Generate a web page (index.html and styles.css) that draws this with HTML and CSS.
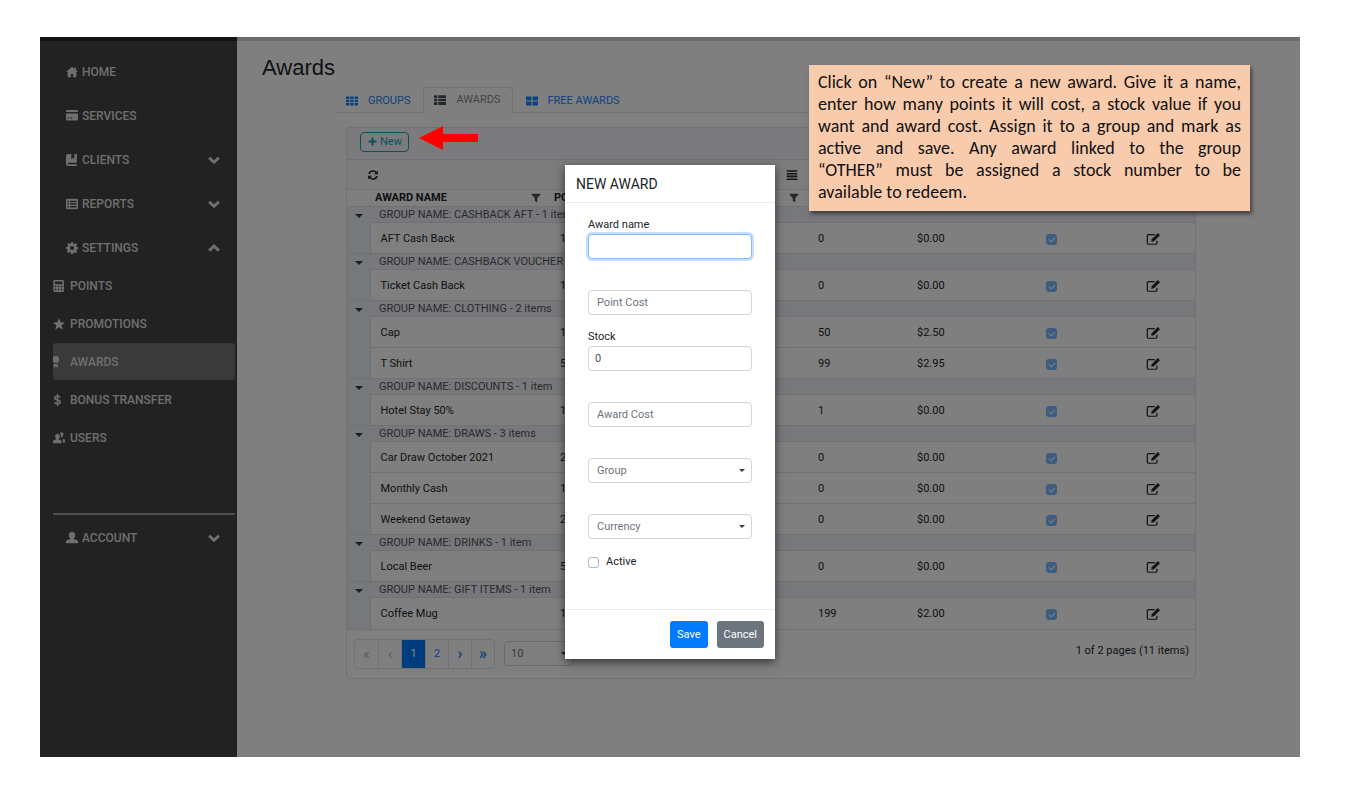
FILE: index.html
```html
<!DOCTYPE html>
<html lang="en">
<head>
<meta charset="utf-8">
<title>Awards</title>
<link rel="stylesheet" href="styles.css">
</head>
<body>
<svg class="sprite" aria-hidden="true">
  <symbol id="i-home" viewBox="0 0 16 16"><path d="M8 1 0 8h2.200v7H6.500v-4.500h3V15h4.300V8H16l-2.500-2.200V2h-2v2z"/></symbol>
  <symbol id="i-card" viewBox="0 0 16 16"><path d="M1 0h14a1 1 0 0 1 1 1v1.800H0V1a1 1 0 0 1 1-1zM0 4.500h16V13a1 1 0 0 1-1 1H1a1 1 0 0 1-1-1zM2 10v1.200h2V10zm3.500 0v1.200h3V10z" fill-rule="evenodd"/></symbol>
  <symbol id="i-book" viewBox="0 0 16 16"><path d="M3 0h4v7l2-2 2 2V0h3.500v11.500H3.300a1 1 0 0 0 0 2h11.200V16H3a3 3 0 0 1-3-3V3a3 3 0 0 1 3-3z"/></symbol>
  <symbol id="i-list" viewBox="0 0 16 16"><path fill-rule="evenodd" d="M1.500 1h13A1.500 1.500 0 0 1 16 2.500v11a1.500 1.500 0 0 1-1.500 1.500h-13A1.500 1.500 0 0 1 0 13.500v-11A1.500 1.500 0 0 1 1.500 1zM2 3.500v2h2v-2zm3.500 0v2H14v-2zM2 7v2h2V7zm3.500 0v2H14V7zM2 10.500v2h2v-2zm3.500 0v2H14v-2z"/></symbol>
  <symbol id="i-gear" viewBox="0 0 16 16"><path fill-rule="evenodd" d="M6.700 0h2.600l.4 2.200 1.400.6 1.900-1.300 1.800 1.800-1.300 1.900.6 1.400 2.200.4v2.500l-2.200.4-.6 1.400 1.300 1.900-1.800 1.800-1.900-1.300-1.400.6L9.300 16H6.700l-.4-2.200-1.400-.6L3 14.500l-1.800-1.800 1.300-1.900-.6-1.400L0 9V6.600l2.200-.4.6-1.400L1.500 3l1.800-1.800 1.900 1.300 1.100-.4zM8 5.200a2.800 2.800 0 1 0 0 5.600 2.800 2.800 0 0 0 0-5.600z"/></symbol>
  <symbol id="i-calc" viewBox="0 0 16 16"><path fill-rule="evenodd" d="M2 0h11a1.500 1.500 0 0 1 1.500 1.500v13A1.500 1.500 0 0 1 13 16H2a1.500 1.500 0 0 1-1.500-1.500v-13A1.500 1.500 0 0 1 2 0zm.5 2v3.500h10V2zm0 5.500v2h2v-2zm4 0v2h2v-2zm4 0v2h2v-2zm-8 4v2h2v-2zm4 0v2h2v-2zm4 0v2h2v-2z"/></symbol>
  <symbol id="i-star" viewBox="0 0 16 16"><path d="m8 0 2.200 5.500 5.800.4-4.500 3.700L13 15.500l-5-3.200-5 3.200 1.500-5.900L0 5.900l5.800-.4z"/></symbol>
  <symbol id="i-award" viewBox="0 0 16 16"><circle cx="3.500" cy="4.500" r="4.500"/><path d="M1 10.500h5.500V16l-2.700-2L1 16z"/></symbol>
  <symbol id="i-dollar" viewBox="0 0 16 16"><path d="M9.500 4.700C9 3.500 7.800 3 6 3 3.800 3 2.300 3.800 2.300 5.300 2.300 9 9.800 6.700 9.800 10.800c0 1.400-1.600 2.300-3.800 2.300-2.300 0-3.500-.8-4-2.100M6 0v16" fill="none" stroke="currentColor" stroke-width="2"/></symbol>
  <symbol id="i-users" viewBox="0 0 16 16"><path d="M6 2.500a3.200 3.200 0 0 1 3.200 3.200c0 1.500-.9 3.300-2 4L10.500 11a1.500 1.500 0 0 1 .9 1.400V15H0v-2.600A1.500 1.500 0 0 1 1 11l3.700-1.300c-1-.7-1.900-2.500-1.900-4A3.200 3.200 0 0 1 6 2.500zM10 1a2.500 2.500 0 0 1 4 2c0 1.300-.5 2.300-1.200 3L10.500 8l.3-2.500A5 5 0 0 0 9 2zM13 9l2 .5a1.500 1.500 0 0 1 1 1.500v3h-3z"/></symbol>
  <symbol id="i-user" viewBox="0 0 16 16"><path d="M8 0a4.200 4.200 0 0 1 4.200 4.200c0 2-1 4-2.400 5l4.700 1.500A2 2 0 0 1 16 12.500V15H0v-2.500a2 2 0 0 1 1.500-1.800l4.700-1.500c-1.400-1-2.400-3-2.400-5A4.200 4.200 0 0 1 8 0z"/></symbol>
  <symbol id="i-down" viewBox="0 0 16 16"><path d="m1.500 5 6.500 6 6.500-6" fill="none" stroke="currentColor" stroke-width="4"/></symbol>
  <symbol id="i-up" viewBox="0 0 16 16"><path d="m1.500 11.500 6.500-6 6.500 6" fill="none" stroke="currentColor" stroke-width="4"/></symbol>
  <symbol id="i-grid9" viewBox="0 0 16 16"><path d="M0 2h4.500v3.300H0zm5.700 0h4.500v3.300H5.700zm5.800 0H16v3.300h-4.500zM0 6.400h4.500v3.200H0zm5.700 0h4.500v3.200H5.700zm5.800 0H16v3.200h-4.500zM0 10.700h4.500V14H0zm5.700 0h4.500V14H5.700zm5.800 0H16V14h-4.500z"/></symbol>
  <symbol id="i-thlist" viewBox="0 0 16 16"><path d="M0 1.500h4.500v3.700H0zm5.700 0H16v3.700H5.700zM0 6.200h4.500v3.600H0zm5.700 0H16v3.600H5.700zM0 10.800h4.500v3.700H0zm5.700 0H16v3.700H5.700z"/></symbol>
  <symbol id="i-grid4" viewBox="0 0 16 16"><path d="M0 2h7.300v5.400H0zm8.700 0H16v5.400H8.700zM0 8.600h7.300V14H0zm8.700 0H16V14H8.700z"/></symbol>
  <symbol id="i-plus" viewBox="0 0 16 16"><path d="M6.300 1h3.400v5.300H15v3.400H9.700V15H6.300V9.700H1V6.300h5.300z"/></symbol>
  <symbol id="i-refresh" viewBox="0 0 16 16"><path d="M2.500 6.500A5.700 5.700 0 0 1 12.500 5M13.500 9.500A5.700 5.700 0 0 1 3.500 11" fill="none" stroke="currentColor" stroke-width="2.200"/><path d="M14.500 2v5h-5zM1.500 14V9h5z"/></symbol>
  <symbol id="i-menu" viewBox="0 0 16 16"><path d="M1 1.500h14v2.200H1zm0 3.700h14v2.100H1zm0 3.600h14V11H1zm0 3.700h14v2.200H1z"/></symbol>
  <symbol id="i-filter" viewBox="0 0 16 16"><path d="M1 1h14v1.800L10 8v7l-4-2.500V8L1 2.800z"/></symbol>
  <symbol id="i-edit" viewBox="0 0 16 16"><path d="M10 3H3A1.500 1.500 0 0 0 1.500 4.500v8A1.500 1.500 0 0 0 3 14h8a1.500 1.500 0 0 0 1.500-1.500V10" fill="none" stroke="currentColor" stroke-width="1.400"/><path d="m6 11 .5-2.800 6.500-6.500a.8.8 0 0 1 1.100 0l1.400 1.400a.8.8 0 0 1 0 1.100L9 10.500z"/></symbol>
</svg>

<div class="frame">
  <aside class="sidebar">
    <nav>
      <ul class="menu">
        <li><a class="item" href="#"><svg class="ic"><use href="#i-home"/></svg>HOME</a></li>
        <li><a class="item" href="#"><svg class="ic"><use href="#i-card"/></svg>SERVICES</a></li>
        <li><a class="item" href="#"><svg class="ic"><use href="#i-book"/></svg>CLIENTS<svg class="ic chev"><use href="#i-down"/></svg></a></li>
        <li><a class="item" href="#"><svg class="ic"><use href="#i-list"/></svg>REPORTS<svg class="ic chev"><use href="#i-down"/></svg></a></li>
        <li><a class="item" href="#"><svg class="ic"><use href="#i-gear"/></svg>SETTINGS<svg class="ic chev"><use href="#i-up"/></svg></a>
          <ul class="submenu">
            <li><a class="sub" href="#"><svg class="ic"><use href="#i-calc"/></svg>POINTS</a></li>
            <li><a class="sub" href="#"><svg class="ic"><use href="#i-star"/></svg>PROMOTIONS</a></li>
            <li><a class="sub active" href="#"><svg class="ic"><use href="#i-award"/></svg>AWARDS</a></li>
            <li><a class="sub" href="#"><svg class="ic"><use href="#i-dollar"/></svg>BONUS TRANSFER</a></li>
            <li><a class="sub" href="#"><svg class="ic"><use href="#i-users"/></svg>USERS</a></li>
          </ul>
        </li>
      </ul>
    </nav>
    <div class="account">
      <a class="item" href="#"><svg class="ic"><use href="#i-user"/></svg>ACCOUNT<svg class="ic chev"><use href="#i-down"/></svg></a>
    </div>
  </aside>

  <main class="main">
    <h1>Awards</h1>
    <div class="content">
      <nav class="tabs">
        <a class="tab" href="#"><svg class="ic"><use href="#i-grid9"/></svg>GROUPS</a>
        <a class="tab current" href="#"><svg class="ic"><use href="#i-thlist"/></svg>AWARDS</a>
        <a class="tab" href="#"><svg class="ic"><use href="#i-grid4"/></svg>FREE AWARDS</a>
      </nav>
      <section class="card">
        <div class="toolbar">
          <button class="new" type="button"><svg class="ic"><use href="#i-plus"/></svg>New</button>
        </div>
        <table>
          <colgroup><col class="c-toggle"><col class="c-name"><col><col class="c-stock"><col class="c-cost"><col class="c-active"><col class="c-edit"></colgroup>
          <thead>
            <tr class="tools"><td colspan="2"><button class="icon-btn" type="button" aria-label="Refresh"><svg class="ic"><use href="#i-refresh"/></svg></button></td><td class="end"><button class="icon-btn" type="button" aria-label="Columns"><svg class="ic"><use href="#i-menu"/></svg></button></td><td colspan="4"></td></tr>
            <tr class="heads"><th colspan="2"><div class="head first">AWARD NAME<svg class="ic"><use href="#i-filter"/></svg></div></th><th><div class="head">POINT COST<svg class="ic"><use href="#i-filter"/></svg></div></th><th colspan="4"></th></tr>
          </thead>
          <tbody>
            <tr class="group"><td><i class="caret"></i></td><td colspan="6">GROUP NAME: CASHBACK AFT - 1 item</td></tr>
            <tr><td></td><td>AFT Cash Back</td><td>1</td><td>0</td><td>$0.00</td><td class="mid"><input type="checkbox" checked disabled aria-label="Active"></td><td class="mid"><button class="icon-btn edit" type="button" aria-label="Edit"><svg class="ic"><use href="#i-edit"/></svg></button></td></tr>
            <tr class="group"><td><i class="caret"></i></td><td colspan="6">GROUP NAME: CASHBACK VOUCHER - 1 item</td></tr>
            <tr><td></td><td>Ticket Cash Back</td><td>1</td><td>0</td><td>$0.00</td><td class="mid"><input type="checkbox" checked disabled aria-label="Active"></td><td class="mid"><button class="icon-btn edit" type="button" aria-label="Edit"><svg class="ic"><use href="#i-edit"/></svg></button></td></tr>
            <tr class="group"><td><i class="caret"></i></td><td colspan="6">GROUP NAME: CLOTHING - 2 items</td></tr>
            <tr><td></td><td>Cap</td><td>1</td><td>50</td><td>$2.50</td><td class="mid"><input type="checkbox" checked disabled aria-label="Active"></td><td class="mid"><button class="icon-btn edit" type="button" aria-label="Edit"><svg class="ic"><use href="#i-edit"/></svg></button></td></tr>
            <tr><td></td><td>T Shirt</td><td>5</td><td>99</td><td>$2.95</td><td class="mid"><input type="checkbox" checked disabled aria-label="Active"></td><td class="mid"><button class="icon-btn edit" type="button" aria-label="Edit"><svg class="ic"><use href="#i-edit"/></svg></button></td></tr>
            <tr class="group"><td><i class="caret"></i></td><td colspan="6">GROUP NAME: DISCOUNTS - 1 item</td></tr>
            <tr><td></td><td>Hotel Stay 50%</td><td>1</td><td>1</td><td>$0.00</td><td class="mid"><input type="checkbox" checked disabled aria-label="Active"></td><td class="mid"><button class="icon-btn edit" type="button" aria-label="Edit"><svg class="ic"><use href="#i-edit"/></svg></button></td></tr>
            <tr class="group"><td><i class="caret"></i></td><td colspan="6">GROUP NAME: DRAWS - 3 items</td></tr>
            <tr><td></td><td>Car Draw October 2021</td><td>2</td><td>0</td><td>$0.00</td><td class="mid"><input type="checkbox" checked disabled aria-label="Active"></td><td class="mid"><button class="icon-btn edit" type="button" aria-label="Edit"><svg class="ic"><use href="#i-edit"/></svg></button></td></tr>
            <tr><td></td><td>Monthly Cash</td><td>1</td><td>0</td><td>$0.00</td><td class="mid"><input type="checkbox" checked disabled aria-label="Active"></td><td class="mid"><button class="icon-btn edit" type="button" aria-label="Edit"><svg class="ic"><use href="#i-edit"/></svg></button></td></tr>
            <tr><td></td><td>Weekend Getaway</td><td>2</td><td>0</td><td>$0.00</td><td class="mid"><input type="checkbox" checked disabled aria-label="Active"></td><td class="mid"><button class="icon-btn edit" type="button" aria-label="Edit"><svg class="ic"><use href="#i-edit"/></svg></button></td></tr>
            <tr class="group"><td><i class="caret"></i></td><td colspan="6">GROUP NAME: DRINKS - 1 item</td></tr>
            <tr><td></td><td>Local Beer</td><td>5</td><td>0</td><td>$0.00</td><td class="mid"><input type="checkbox" checked disabled aria-label="Active"></td><td class="mid"><button class="icon-btn edit" type="button" aria-label="Edit"><svg class="ic"><use href="#i-edit"/></svg></button></td></tr>
            <tr class="group"><td><i class="caret"></i></td><td colspan="6">GROUP NAME: GIFT ITEMS - 1 item</td></tr>
            <tr><td></td><td>Coffee Mug</td><td>1</td><td>199</td><td>$2.00</td><td class="mid"><input type="checkbox" checked disabled aria-label="Active"></td><td class="mid"><button class="icon-btn edit" type="button" aria-label="Edit"><svg class="ic"><use href="#i-edit"/></svg></button></td></tr>
          </tbody>
        </table>
        <footer class="pager">
          <div class="pages">
            <button type="button" disabled>«</button><button type="button" disabled>‹</button><button type="button" class="on">1</button><button type="button">2</button><button type="button" class="sym">›</button><button type="button" class="sym">»</button>
          </div>
          <div class="select size"><select id="size"><option>10</option></select></div>
          <label class="per" for="size">items per page</label>
          <span class="count">1 of 2 pages (11 items)</span>
        </footer>
      </section>
    </div>
  </main>

  <div class="backdrop"></div>
  <svg class="pointer" viewBox="0 0 59 24" aria-hidden="true"><path d="M0 12 24 0v8h35v8H24v8z"/></svg>

  <form class="modal" role="dialog" aria-labelledby="modal-title">
    <h2 id="modal-title">NEW AWARD</h2>
    <div class="fields">
      <div class="field"><label for="name">Award name</label><input class="focus" id="name" type="text"></div>
      <div class="field"><span></span><input id="points" type="text" placeholder="Point Cost" aria-label="Point Cost"></div>
      <div class="field"><label for="stock">Stock</label><input class="filled" id="stock" type="text" value="0"></div>
      <div class="field"><span></span><input id="cost" type="text" placeholder="Award Cost" aria-label="Award Cost"></div>
      <div class="field"><span></span><div class="select"><select aria-label="Group"><option>Group</option></select></div></div>
      <div class="field"><span></span><div class="select"><select aria-label="Currency"><option>Currency</option></select></div></div>
      <label class="check"><input type="checkbox">Active</label>
    </div>
    <footer><button class="save" type="button">Save</button><button class="cancel" type="button">Cancel</button></footer>
  </form>

  <aside class="callout">
    <span>Click on “New” to create a new award. Give it a name,</span>
    <span>enter how many points it will cost, a stock value if you</span>
    <span>want and award cost. Assign it to a group and mark as</span>
    <span>active and save. Any award linked to the group</span>
    <span>“OTHER” must be assigned a stock number to be</span>
    <span>available to redeem.</span>
  </aside>
</div>
</body>
</html>
```

FILE: styles.css
```css
* { box-sizing: border-box; }
body { margin: 0; padding: 37px 61px 37px 40px; background: #fff; color: #212529; font: 11px/16px Roboto, "Liberation Sans", sans-serif; }
ul { list-style: none; margin: 0; padding: 0; }
a { text-decoration: none; color: inherit; }
button, input, select { font: inherit; color: inherit; margin: 0; }
button { padding: 0; border: 0; background: none; cursor: pointer; }
.sprite { position: absolute; width: 0; height: 0; }
.ic { width: 12px; height: 12px; fill: currentColor; flex: none; display: block; }

.frame { position: relative; display: grid; grid-template-columns: 197px 1fr; min-height: 720px; background: #fff; }
.backdrop { position: absolute; inset: 0; background: rgba(0, 0, 0, .5); }

.sidebar { background: #444; border-top: 4px solid #262626; padding: 12px 2px 12px 13px; color: #dedede; font-size: 12px; font-weight: 500; }
.menu { display: grid; gap: 6px; }
.item { display: flex; align-items: center; gap: 4px; height: 38px; padding: 0 15px 0 13px; }
.chev { margin-left: auto; }
.submenu { display: grid; gap: 1px; }
.sub { display: flex; align-items: center; gap: 5px; height: 37px; border-radius: 3px; }
.active { background: #747474; }
.account { margin-top: 57px; border-top: 2px solid #a0a0a0; padding-top: 4px; }

.main { border-top: 4px solid #d8d8d8; padding: 13px 92px 0 25px; }
h1 { margin: 0; font: 22px/28px "Liberation Sans", Arial, sans-serif; color: #212529; }
.content { margin-left: 73px; }
.tabs { display: flex; height: 31px; padding-top: 5px; border-bottom: 1px solid #dee2e6; }
.tab { display: flex; align-items: center; gap: 10px; height: 26px; padding: 2px 13px 0 11px; color: #1484ff; }
.tab + .tab { padding-left: 13px; }
.tabs .current { margin-bottom: -1px; padding: 0 11px 0 10px; border: 1px solid #dee2e6; border-bottom-color: #fff; border-radius: 4px 4px 0 0; background: #fff; color: #888; }
.tabs .tab.current { padding-left: 10px; }
.current .ic { color: #495057; }

.card { margin: 14px 12px 0 11px; border: 1px solid #dee2e6; border-radius: 4px; }
.toolbar { display: flex; align-items: center; height: 31px; padding: 0 13px 4px; background: #f7f7fb; }
.new { display: flex; align-items: center; gap: 3px; height: 20px; padding: 0 6px 0 7px; border: 1px solid #17a2b8; border-radius: 4px; color: #17a2b8; }
.new .ic { width: 9px; height: 9px; }
.pointer { position: absolute; left: 379px; top: 89px; width: 59px; height: 24px; fill: #f00; }

table { width: 100%; table-layout: fixed; border-collapse: collapse; }
.c-toggle { width: 23px; }
.c-name { width: 180px; }
.c-stock { width: 99px; }
.c-cost { width: 85px; }
.c-active { width: 118px; }
.c-edit { width: 85px; }
td, th { padding: 0 10px; text-align: left; border-top: 1px solid #dee2e6; font-weight: 400; white-space: nowrap; }
tbody tr { height: 31px; }
tbody td:first-child { padding: 0; background: #eff0f7; border-right: 1px solid #dee2e6; border-top: 0; }
.tools { height: 30px; }
.tools td { padding: 0 20px; background: #f8f8fb; }
.tools .end { padding: 0 10px; }
.end .icon-btn { margin-left: auto; }
.heads { height: 17px; }
.heads th { padding: 0 9px 0 0; font-weight: 700; }
.head { display: flex; justify-content: space-between; align-items: center; height: 16px; padding-left: 4px; }
.head.first { padding-left: 28px; }
.head .ic { width: 10px; height: 10px; color: #495057; }
tbody .group { height: 16px; }
.group td { height: 16px; line-height: 14px; padding: 0 9px; background: #eff0f7; color: #555; }
tbody .group td:first-child { border-right: 0; border-top: 1px solid #dee2e6; }
.caret { display: block; margin: 2px auto 0; width: 0; border: 4px solid transparent; border-top-color: #343a40; border-bottom: 0; }
tbody tr:not(.group) td { padding-top: 1px; }
tbody .mid { text-align: center; padding: 0; }
.icon-btn { display: block; }
.icon-btn.edit { margin: 0 auto; }
.edit .ic { width: 14px; height: 14px; }
input[type="checkbox"] { appearance: none; display: block; width: 11px; height: 11px; border: 1px solid #adb5bd; border-radius: 3px; background: #fff; }
td input[type="checkbox"] { position: relative; margin: 2px auto 0; border: 0; background: #78baff; }
td input[type="checkbox"]::after { content: ""; position: absolute; left: 3px; top: 3px; width: 5px; height: 3px; border: solid #fff; border-width: 0 0 1px 1px; transform: rotate(-45deg); }

.pager { display: flex; align-items: center; height: 49px; padding: 0 6px 0 7px; border-top: 1px solid #dee2e6; }
.pages { display: flex; height: 30px; border: 1px solid #dee2e6; border-radius: 4px; }
.pages button { width: 23px; color: #1484ff; border-left: 1px solid #dee2e6; }
.pages button:first-child { border-left: 0; }
.pages button:disabled { color: #adb5bd; font-size: 14px; }
.pages .sym { font-size: 16px; font-weight: 700; }
.pages .on { background: #007bff; color: #fff; width: 24px; }
.size { margin: 0 32px 0 9px; width: 70px; }
.count { margin-left: auto; padding-bottom: 5px; }

.select { position: relative; }
.select select, .field input { display: block; width: 100%; height: 25px; padding: 0 8px; border: 1px solid #ced4da; border-radius: 4px; background: #fff; appearance: none; color: #6c757d; outline: 0; }
.size select { padding: 0 6px; }
.select::after { content: ""; position: absolute; right: 7px; top: 11px; border: 3px solid transparent; border-top-color: #343a40; border-bottom: 0; }
.field input::placeholder { color: #6c757d; opacity: 1; }
.field .filled { color: #495057; padding: 0 6px; }
.field .focus { border-color: #80bdff; box-shadow: 0 0 0 2px #c5e0ff; }

.modal { position: absolute; top: 128px; left: 50%; margin-left: -105px; width: 210px; background: #fff; box-shadow: 0 3px 9px rgba(0, 0, 0, .6); }
h2 { margin: 0; padding: 10px 11px 9px; border-bottom: 1px solid #e9ecef; font-size: 14px; line-height: 18px; font-weight: 400; }
.fields { display: grid; gap: 14px; padding: 14px 23px 38px; }
.field { display: grid; grid-template-rows: 17px 25px; }
.check { display: flex; align-items: center; gap: 7px; height: 18px; }
.modal footer { display: flex; justify-content: flex-end; gap: 9px; padding: 11px; border-top: 1px solid #e9ecef; }
.modal footer button { height: 27px; padding: 0 7px; border-radius: 3px; color: #fff; }
.save { background: #007bff; }
.cancel { background: #6c757d; }

.callout { position: absolute; left: 769px; top: 28px; width: 441px; padding: 6px 9px 8px; background: #f8cbad; color: #111; font: 18px/22px Carlito, Lato, sans-serif; box-shadow: 2px 3px 4px rgba(0, 0, 0, .5); }
.callout span { display: block; white-space: nowrap; text-align: justify; text-align-last: justify; }
.callout span:last-child { text-align-last: left; }
```
